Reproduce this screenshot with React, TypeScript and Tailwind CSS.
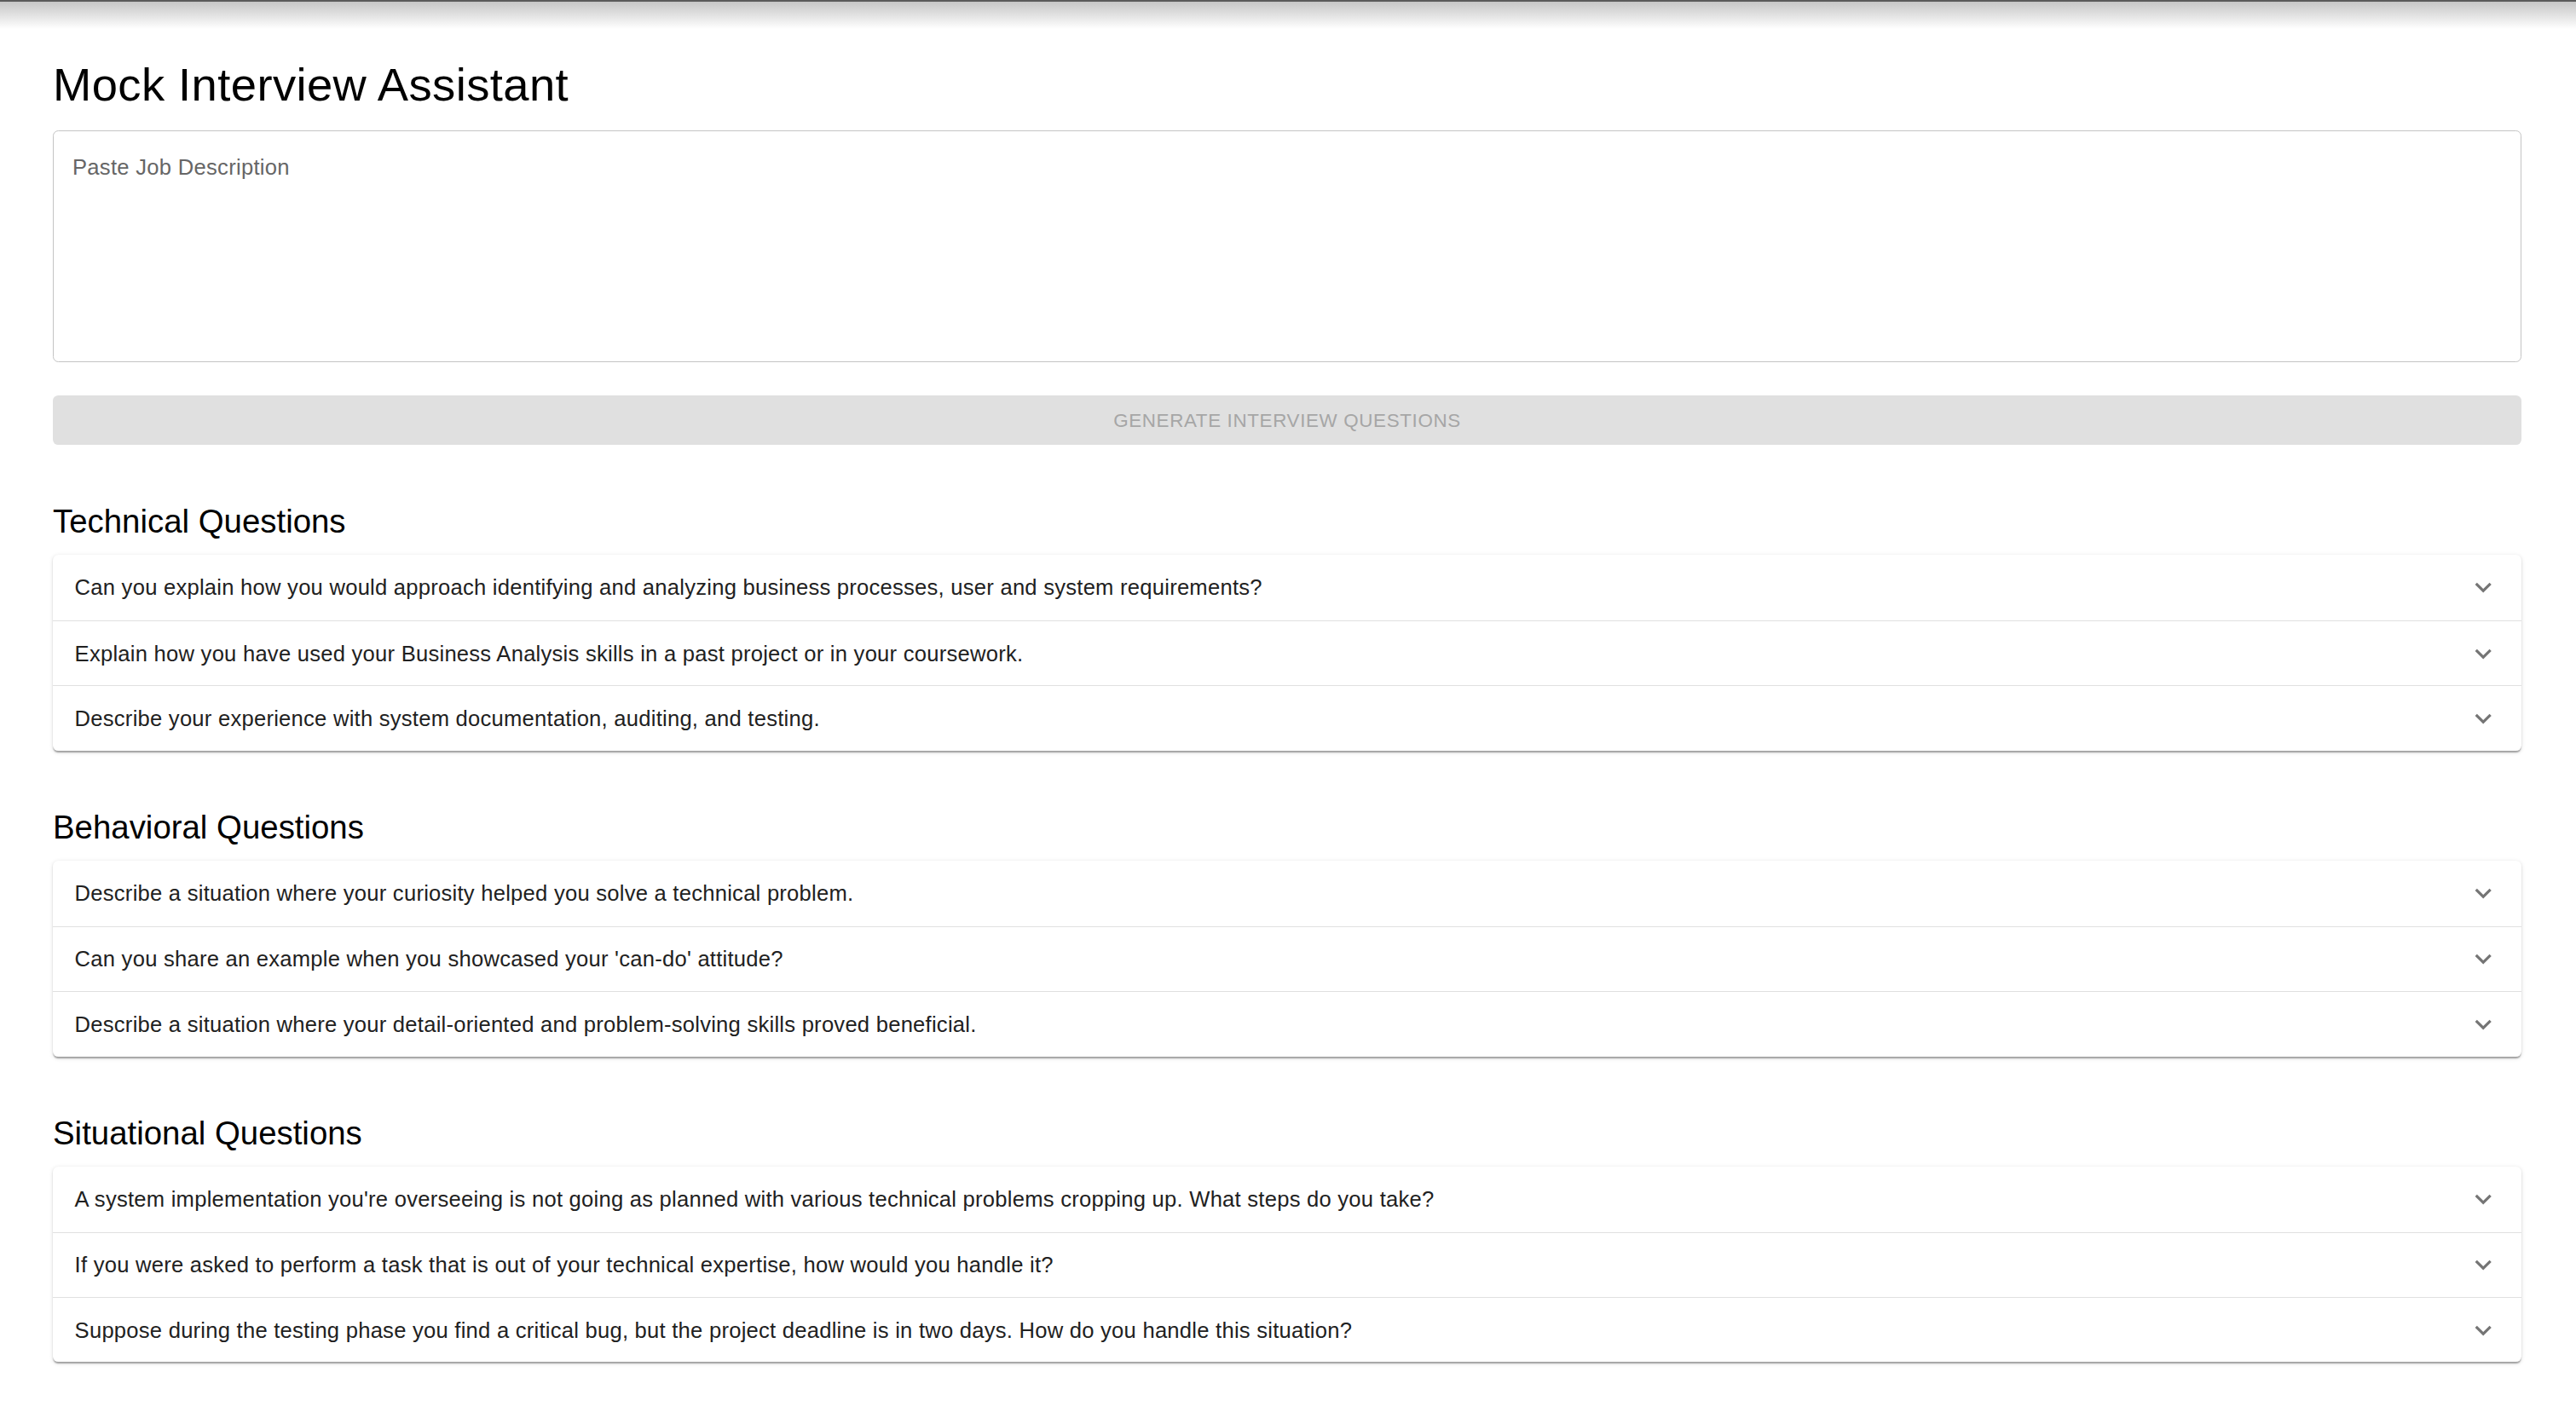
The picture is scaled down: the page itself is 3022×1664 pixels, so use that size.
import React, { useState } from 'react';

interface Section {
  title: string;
  questions: string[];
}

const sections: Section[] = [
  {
    title: 'Technical Questions',
    questions: [
      'Can you explain how you would approach identifying and analyzing business processes, user and system requirements?',
      'Explain how you have used your Business Analysis skills in a past project or in your coursework.',
      'Describe your experience with system documentation, auditing, and testing.',
    ],
  },
  {
    title: 'Behavioral Questions',
    questions: [
      'Describe a situation where your curiosity helped you solve a technical problem.',
      "Can you share an example when you showcased your 'can-do' attitude?",
      'Describe a situation where your detail-oriented and problem-solving skills proved beneficial.',
    ],
  },
  {
    title: 'Situational Questions',
    questions: [
      "A system implementation you're overseeing is not going as planned with various technical problems cropping up. What steps do you take?",
      'If you were asked to perform a task that is out of your technical expertise, how would you handle it?',
      'Suppose during the testing phase you find a critical bug, but the project deadline is in two days. How do you handle this situation?',
    ],
  },
];

const ExpandMore = () => (
  <svg viewBox="0 0 24 24" className="w-[38.4px] h-[38.4px] fill-[#757575] shrink-0">
    <path d="M16.59 8.59 12 13.17 7.41 8.59 6 10l6 6 6-6z" />
  </svg>
);

const QuestionList: React.FC<{ section: Section; first: boolean }> = ({ section, first }) => {
  const [open, setOpen] = useState<number | null>(null);

  return (
    <div className={first ? 'mt-[64px]' : 'mt-[64.3px]'}>
      <h2 className="text-[38.4px] leading-[51.2px] font-normal text-black mb-[13.5px]">{section.title}</h2>
      <div className="bg-white rounded-[6.4px] shadow-[0_3.2px_1.6px_-1.6px_rgba(0,0,0,0.2),0_1.6px_1.6px_0_rgba(0,0,0,0.14),0_1.6px_4.8px_0_rgba(0,0,0,0.12)]">
        {section.questions.map((q, i) => (
          <div key={i} className={i > 0 ? 'border-t-[1.6px] border-[#e0e0e0]' : ''}>
            <button
              type="button"
              onClick={() => setOpen(open === i ? null : i)}
              className={`w-full flex items-center justify-between px-[25.6px] text-left ${i > 0 ? 'h-[75.4px]' : 'h-[77px]'}`}
            >
              <span className="text-[25.6px] leading-[38.4px] tracking-[0.24px] text-[#212121]">{q}</span>
              <span className={open === i ? 'rotate-180' : ''}>
                <ExpandMore />
              </span>
            </button>
          </div>
        ))}
      </div>
    </div>
  );
};

export default function App() {
  const [jobDesc, setJobDesc] = useState('');

  return (
    <div className="min-h-screen bg-white font-['Liberation_Sans',Arial,sans-serif]">
      {/* top shadow strip */}
      <div className="h-[2px] bg-[#5a5a5a]" />
      <div className="h-[32px] bg-gradient-to-b from-[#c6c6c6] to-white" />

      <div className="pl-[62px] pr-[64px] pt-[31.5px] pb-[60px]">
        <h1 className="text-[54.4px] leading-[67.2px] font-normal tracking-[0.4px] text-black mb-[20.3px]">Mock Interview Assistant</h1>

        <textarea
          value={jobDesc}
          onChange={e => setJobDesc(e.target.value)}
          placeholder="Paste Job Description"
          className="block w-full h-[272px] resize-none rounded-[6.4px] border-[1.6px] border-[#c4c4c4] pt-[24px] px-[22px] text-[25.6px] leading-[36.8px] tracking-[0.28px] text-[#212121] placeholder:text-[#666666] outline-none"
        />

        <button
          type="button"
          disabled
          className="mt-[39px] w-full h-[58.4px] rounded-[6.4px] bg-[#e0e0e0] text-[#a6a6a6] text-[22.4px] leading-[39px] uppercase tracking-[0.64px]"
        >
          Generate Interview Questions
        </button>

        {sections.map((s, i) => (
          <QuestionList key={s.title} section={s} first={i === 0} />
        ))}
      </div>
    </div>
  );
}
